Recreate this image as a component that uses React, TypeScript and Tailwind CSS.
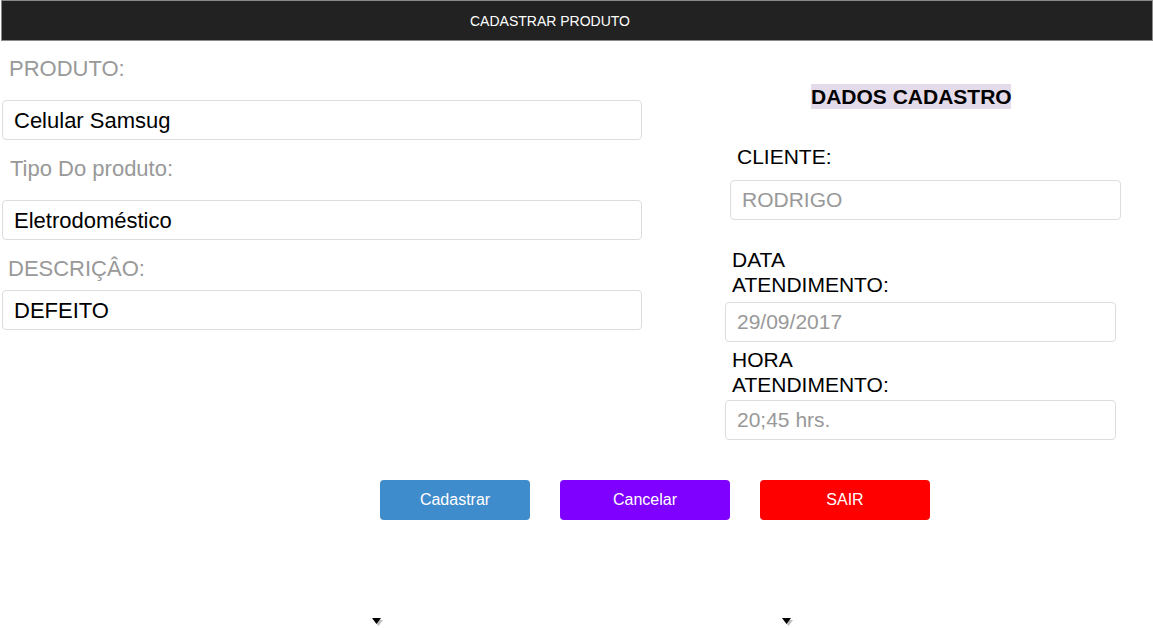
import React from "react";

function Caret() {
  return (
    <svg width="12" height="9" viewBox="0 0 12 9" className="block">
      <polygon points="2,2 11,2 6.5,8" fill="#bdbdbd" />
      <polygon points="0,0 9,0 4.5,6" fill="#000" />
    </svg>
  );
}

export default function App() {
  const font = { fontFamily: '"Liberation Sans", Arial, sans-serif' };
  return (
    <div className="w-[1153px] h-[628px] bg-white overflow-hidden" style={font}>
      {/* Header */}
      <div className="ml-[1px] w-[1152px] h-[41px] bg-[#222222] border border-[#8a8a8a] flex items-center justify-center pr-[54px]">
        <span className="text-white text-[14px] leading-none">CADASTRAR PRODUTO</span>
      </div>

      <div className="flex">
        {/* Left column */}
        <div className="w-[642px] pl-[2px] flex flex-col">
          <div className="mt-[16px] pl-[7px] h-[24px] leading-[24px] text-[22px] text-[#999999]">PRODUTO:</div>
          <div className="mt-[19px] h-[40px] w-[640px] border border-[#dddddd] rounded-[4px] pl-[11px] flex items-center text-[22px] text-black">
            Celular Samsug
          </div>
          <div className="mt-[17px] pl-[8px] h-[24px] leading-[24px] text-[22px] text-[#999999]">Tipo Do produto:</div>
          <div className="mt-[19px] h-[40px] w-[640px] border border-[#dddddd] rounded-[4px] pl-[11px] flex items-center text-[22px] text-black">
            Eletrodoméstico
          </div>
          <div className="mt-[17px] pl-[6px] h-[24px] leading-[24px] text-[22px] text-[#999999]">DESCRIÇÂO:</div>
          <div className="mt-[9px] h-[40px] w-[640px] border border-[#dddddd] rounded-[4px] pl-[11px] flex items-center text-[22px] text-black">
            DEFEITO
          </div>
        </div>

        {/* Right column */}
        <div className="flex-1 flex flex-col">
          <div className="mt-[43px] pl-[169px] flex">
            <span className="block h-[25px] leading-[25px] w-[200px] whitespace-nowrap text-center bg-[#e4dbea] text-[21px] font-bold text-black">
              DADOS CADASTRO
            </span>
          </div>
          <div className="mt-[36px] pl-[95px] h-[24px] leading-[24px] text-[21px] text-black">CLIENTE:</div>
          <div className="mt-[11px] ml-[88px] h-[40px] w-[391px] border border-[#dddddd] rounded-[4px] pl-[11px] flex items-center text-[21px] text-[#999999]">
            RODRIGO
          </div>
          <div className="mt-[27px] pl-[90px] leading-[25px] text-[21px] text-black">
            DATA
            <br />
            ATENDIMENTO:
          </div>
          <div className="mt-[5px] ml-[83px] h-[40px] w-[391px] border border-[#dddddd] rounded-[4px] pl-[11px] flex items-center text-[21px] text-[#999999]">
            29/09/2017
          </div>
          <div className="mt-[5px] pl-[90px] leading-[25px] text-[21px] text-black">
            HORA
            <br />
            ATENDIMENTO:
          </div>
          <div className="mt-[3px] ml-[83px] h-[40px] w-[391px] border border-[#dddddd] rounded-[4px] pl-[11px] flex items-center text-[21px] text-[#999999]">
            20;45 hrs.
          </div>
        </div>
      </div>

      {/* Buttons */}
      <div className="mt-[40px] pl-[380px] flex gap-[30px]">
        <button className="w-[150px] h-[40px] rounded-[4px] bg-[#3f8ccc] text-white text-[16px]">Cadastrar</button>
        <button className="w-[170px] h-[40px] rounded-[4px] bg-[#8000ff] text-white text-[16px]">Cancelar</button>
        <button className="w-[170px] h-[40px] rounded-[4px] bg-[#ff0000] text-white text-[16px]">SAIR</button>
      </div>

      {/* Carets */}
      <div className="mt-[98px] pl-[372px] flex gap-[398px]">
        <Caret />
        <Caret />
      </div>
    </div>
  );
}
